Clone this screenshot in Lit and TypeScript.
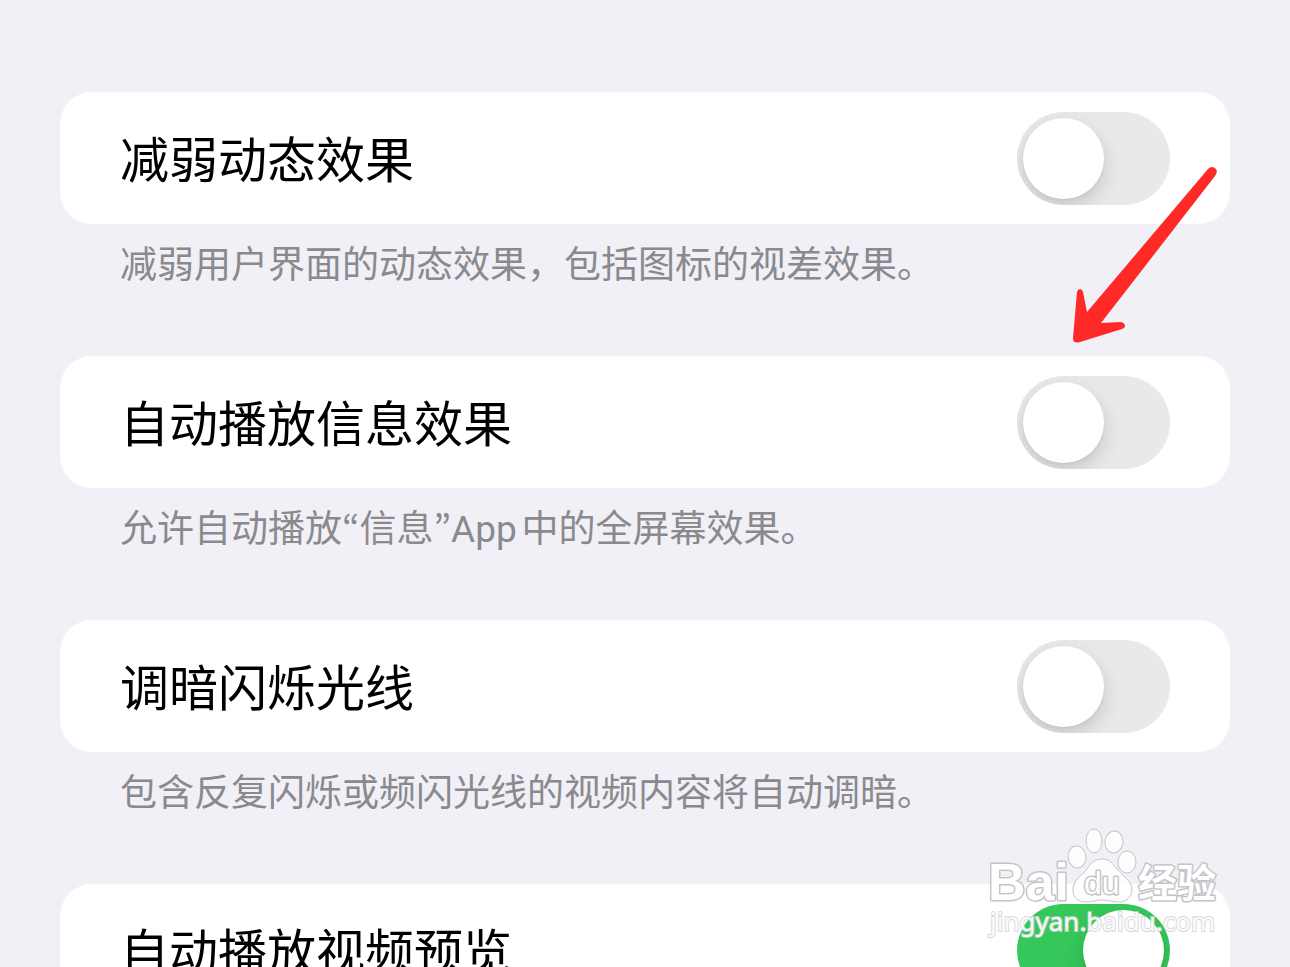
import { LitElement, html, css, svg } from "lit";
import { customElement, property, state } from "lit/decorators.js";

interface Setting {
  id: string;
  title: string;
  note: string;
  on: boolean;
}

@customElement("setting-row")
class SettingRow extends LitElement {
  @property() name = "";
  @property() heading = "";
  @property() note = "";
  @property({ type: Boolean }) on = false;

  static styles = css`
    :host {
      display: block;
    }
    .card {
      display: flex;
      align-items: center;
      justify-content: space-between;
      gap: 24px;
      min-height: 132px;
      padding: 0 60px;
      box-sizing: border-box;
      border-radius: 32px;
      background: #fff;
    }
    .title {
      flex: 1;
      padding-top: 8px;
      font-size: 49px;
      line-height: 72px;
      color: #000;
    }
    .switch {
      appearance: none;
      flex: none;
      display: flex;
      align-items: center;
      width: 153px;
      height: 93px;
      margin: 0;
      padding: 0 6px;
      box-sizing: border-box;
      border-radius: 47px;
      background: #e9e9ea;
      overflow: hidden;
      cursor: pointer;
    }
    .switch::before {
      content: "";
      width: 81px;
      height: 81px;
      border-radius: 50%;
      background: #fff;
      box-shadow: 0 8px 20px rgba(0, 0, 0, 0.15), 0 2px 4px rgba(0, 0, 0, 0.04);
    }
    .switch:checked {
      justify-content: flex-end;
      background: #35c759;
    }
    .note {
      margin: 0;
      padding: 14px 60px 0;
      font-size: 37px;
      line-height: 56px;
      color: #8a8a8e;
      text-autospace: normal;
    }
    .quote {
      font-family: "Noto Sans CJK KR", sans-serif;
      line-height: 1;
    }
  `;

  /* Curly quotes are set in a family that draws them at half width. */
  private noteText() {
    return this.note
      .split(/([“”])/)
      .map((part) => (part === "“" || part === "”" ? html`<span class="quote">${part}</span>` : part));
  }

  render() {
    return html`
      <div class="card">
        <label class="title" for=${this.name}>${this.heading}</label>
        <input
          class="switch"
          type="checkbox"
          role="switch"
          id=${this.name}
          aria-describedby="note"
          .checked=${this.on}
        />
      </div>
      ${this.note ? html`<p class="note" id="note">${this.noteText()}</p>` : null}
    `;
  }
}

@customElement("app-root")
class AppRoot extends LitElement {
  @state() private settings: Setting[] = [
    { id: "reduce-motion", title: "减弱动态效果", note: "减弱用户界面的动态效果，包括图标的视差效果。", on: false },
    { id: "message-effects", title: "自动播放信息效果", note: "允许自动播放“信息”App中的全屏幕效果。", on: false },
    { id: "dim-flashing", title: "调暗闪烁光线", note: "包含反复闪烁或频闪光线的视频内容将自动调暗。", on: false },
    { id: "video-previews", title: "自动播放视频预览", note: "", on: true },
  ];

  static styles = css`
    :host {
      display: block;
      position: relative;
      height: 100vh;
      overflow: hidden;
      background: #f1f0f6;
      font-family: Roboto, "Noto Sans CJK SC", sans-serif;
    }
    .list {
      display: flex;
      flex-direction: column;
      gap: 62px;
      padding: 92px 60px 0;
    }
    .arrow {
      position: absolute;
      top: 164px;
      right: 70px;
      pointer-events: none;
    }
    .mark {
      position: absolute;
      right: 60px;
      bottom: 17px;
      pointer-events: none;
    }
    .shape {
      fill: #fff;
      fill-opacity: 0.85;
      stroke: #c4c4c8;
      stroke-width: 1;
      stroke-linejoin: round;
    }
    .heavy {
      stroke: #c4c4c8;
      stroke-width: 3;
      paint-order: stroke;
      fill-opacity: 1;
    }
    .latin {
      font: bold 52px "Liberation Sans", sans-serif;
    }
    .small {
      font: 32px "Liberation Sans", sans-serif;
    }
    .han {
      font: bold 39px "Noto Sans CJK SC", sans-serif;
    }
    .site {
      font: 26px "Noto Sans", sans-serif;
      fill: #fff;
      fill-opacity: 0.9;
      stroke: #cfcfd4;
      stroke-width: 2;
      stroke-opacity: 0.8;
      paint-order: stroke;
    }
  `;

  private paw() {
    return svg`
      <ellipse class="shape" cx="107" cy="37" rx="9" ry="11" transform="rotate(-8 107 37)" />
      <ellipse class="shape" cx="124" cy="21" rx="8" ry="12" />
      <ellipse class="shape" cx="144" cy="22" rx="9" ry="11" transform="rotate(10 144 22)" />
      <ellipse class="shape" cx="157" cy="42" rx="9" ry="11" />
      <path class="shape" d="M132 39c-8 0-12 5-15 10-4 6-14 10-14 21 0 8 6 12 12 12 7 0 11-2 17-2s10 2 17 2c7 0 13-5 13-12 0-10-10-14-15-21-4-5-7-10-15-10z" />
    `;
  }

  render() {
    return html`
      <main class="list">
        ${this.settings.map(
          (s) => html`<setting-row .name=${s.id} .heading=${s.title} .note=${s.note} .on=${s.on}></setting-row>`
        )}
      </main>
      <svg class="arrow" width="150" height="182" viewBox="0 0 150 182" aria-hidden="true">
        <path
          fill="#ff2a27"
          d="M138 5Q142 1 146 5Q148 8 145 12L31 159L51 158Q55 159 55 162Q55 164 52 165L10 178Q3 180 3 174L7 128Q8 125 10 125Q12 125 13 128L17 148Z"
        />
      </svg>
      <svg class="mark" width="260" height="130" viewBox="0 0 260 130">
        <text class="shape heavy latin" x="18" y="80">Bai</text>
        ${this.paw()}
        <text class="shape heavy small" x="114" y="74">du</text>
        <text class="shape heavy han" x="168" y="77">经验</text>
        <text class="site" x="20" y="111">jingyan.baidu.com</text>
      </svg>
    `;
  }
}
